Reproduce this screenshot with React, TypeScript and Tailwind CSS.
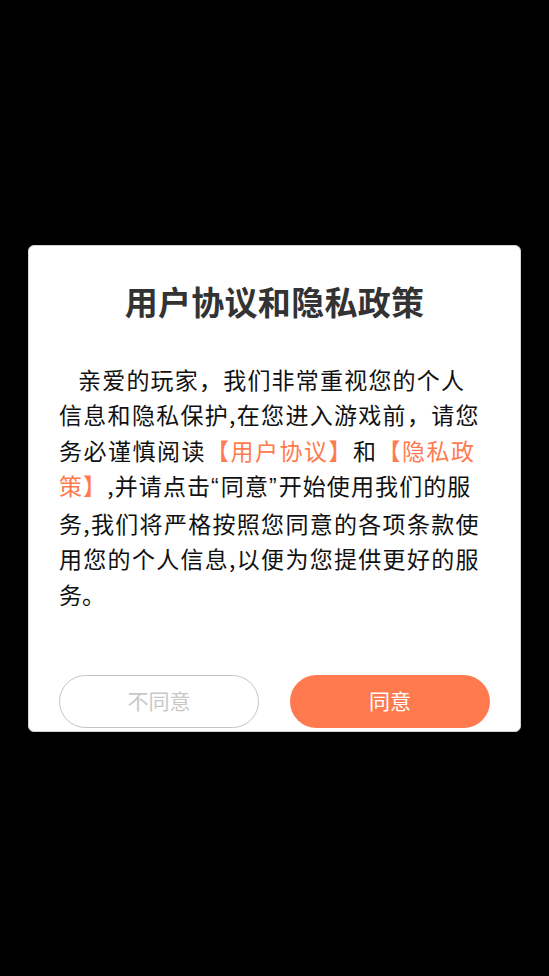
export default function App() {
  const body = "font-['Noto_Sans_CJK_SC','Noto_Sans',sans-serif]";
  const link = "text-[#ff7b4f]";
  // narrow western quotes, as in the reference
  const quote = "font-['Liberation_Sans',sans-serif] tracking-[2px]";

  return (
    <main className="flex min-h-screen items-center justify-center bg-black">
      <section
        className={`flex h-[487px] w-[493px] flex-col rounded-[6px] border border-[#d4d4d4] bg-white px-[30px] pt-[35px] ${body}`}
      >
        <h1 className="text-center text-[33px] leading-[40px] font-bold tracking-[0.3px] text-[#333]">
          用户协议和隐私政策
        </h1>

        <div className="mt-[41px] text-[23px] leading-[35.5px] whitespace-nowrap text-[#111]">
          <div className="pl-[19px] tracking-[1.2px]">亲爱的玩家，我们非常重视您的个人</div>
          <div className="tracking-[1.3px]">信息和隐私保护,在您进入游戏前，请您</div>
          <div className="tracking-[1.5px]">
            务必谨慎阅读<span className={link}>【用户协议】</span>和
            <span className={link}>【隐私政</span>
          </div>
          <div className="tracking-[1.1px]">
            <span className={link}>策】</span>,并请点击<span className={quote}>“</span>同意
            <span className={quote}>”</span>开始使用我们的服
          </div>
          <div className="tracking-[1.3px]">务,我们将严格按照您同意的各项条款使</div>
          <div className="tracking-[1.3px]">用您的个人信息,以便为您提供更好的服</div>
          <div>务。</div>
        </div>

        <div className="mt-auto mb-[3px] flex justify-between">
          <button className="h-[53px] w-[200px] rounded-full border border-[#c4c4c4] bg-white text-[21px] text-[#c8c8c8]">
            不同意
          </button>
          <button className="h-[53px] w-[200px] rounded-full bg-[#ff7b4f] text-[21px] text-white">
            同意
          </button>
        </div>
      </section>
    </main>
  );
}
